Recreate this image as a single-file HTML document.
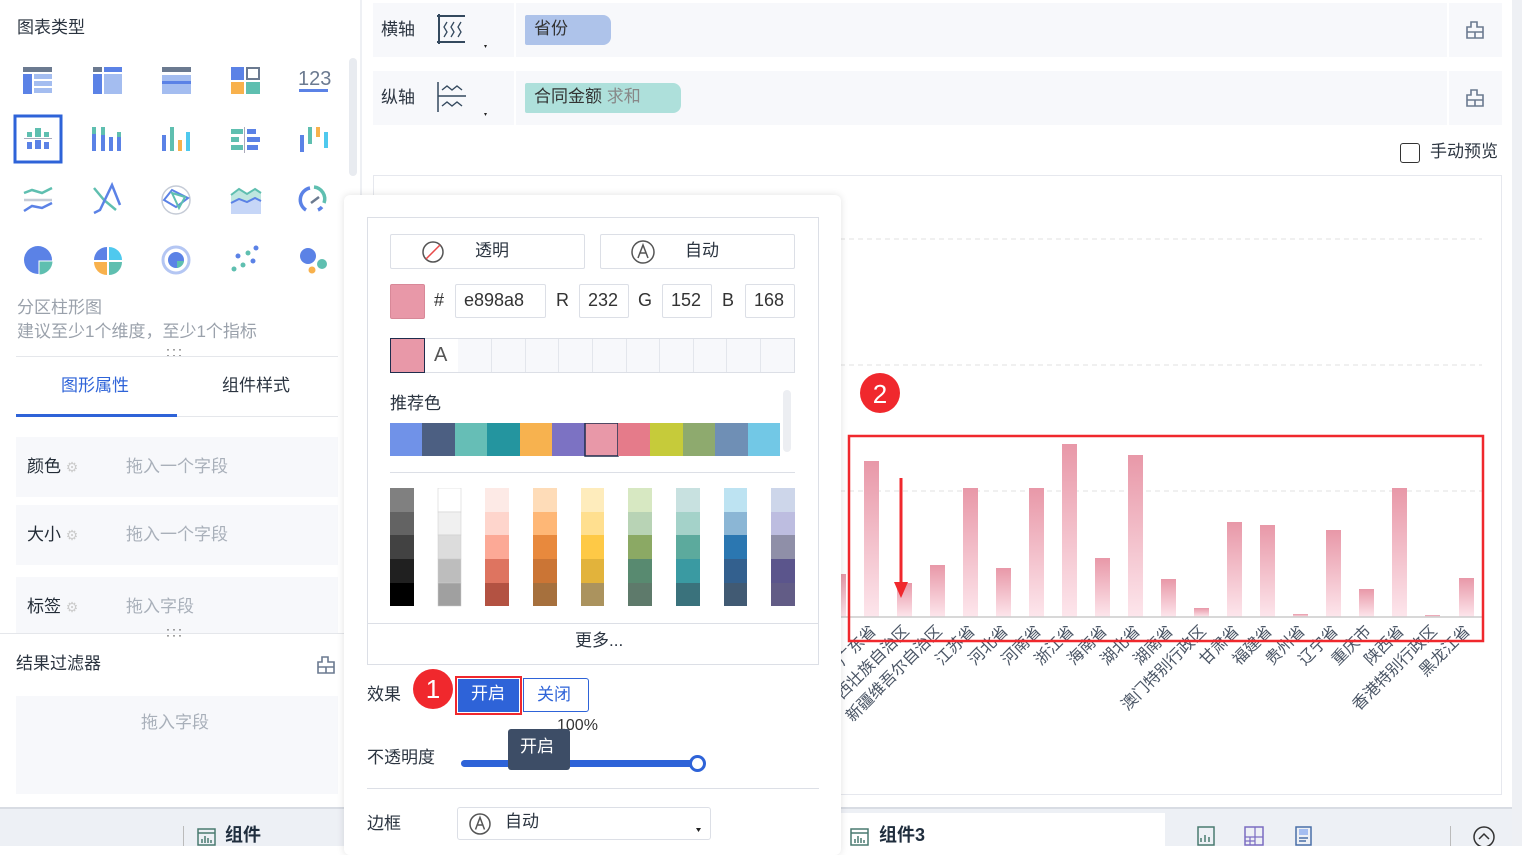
<!DOCTYPE html>
<html><head><meta charset="utf-8"><style>
*{box-sizing:border-box;margin:0;padding:0}
body{width:1522px;height:846px;overflow:hidden;background:#fff;font-family:"Liberation Sans","Noto Sans CJK SC",sans-serif;color:#1f2d3d;position:relative;font-size:16px;line-height:1.2}
.a{position:absolute}
.t{font-size:17px;color:#2b3440}
.g{color:#9aa1ab}
.field{position:absolute;left:16px;width:322px;height:60px;background:#f7f8fb}
.field .l{position:absolute;left:11px;top:20px;font-size:17px;color:#222b36}
.field .p{position:absolute;left:110px;top:20px;font-size:17px;color:#a9b0ba}
.inp{position:absolute;border:1px solid #dcdfe6;border-radius:2px;height:34px;top:284px;font-size:18px;color:#333;padding:5px 0 0 8px}
.cell{position:absolute;top:339px;height:33px;border-right:1px solid #e3e6ec;background:#f7f8fb}
</style></head><body>

<div class="a t" style="left:17px;top:18px">图表类型</div>
<svg class="a" style="left:0;top:55px" width="350" height="230">
 <g transform="translate(23,12)"><rect width="29" height="5" fill="#6b7a90"/><rect y="7" width="9" height="20" fill="#5b82e6"/><rect x="11" y="7" width="18" height="5" fill="#a4bdf0"/><rect x="11" y="14" width="18" height="5" fill="#a4bdf0"/><rect x="11" y="21" width="18" height="5" fill="#a4bdf0"/></g>
 <g transform="translate(93,12)"><rect width="9" height="5" fill="#6b7a90"/><rect x="11" width="18" height="5" fill="#5b82e6"/><rect y="7" width="9" height="20" fill="#5b82e6"/><rect x="11" y="7" width="18" height="20" fill="#a4bdf0"/></g>
 <g transform="translate(162,12)"><rect width="29" height="5" fill="#6b7a90"/><rect y="8" width="29" height="19" fill="#a4bdf0"/><rect y="14" width="29" height="3" fill="#5b82e6"/></g>
 <g transform="translate(231,12)"><rect width="13" height="13" fill="#5b82e6"/><rect x="16" y="1" width="12" height="11" fill="none" stroke="#6b7a90" stroke-width="2"/><rect y="15" width="13" height="12" fill="#f8b14c"/><rect x="15" y="15" width="14" height="12" fill="#5fbfb0"/></g>
 <text x="298" y="30" font-size="20" fill="#6b7a90" font-family="Liberation Sans">123</text><rect x="299" y="34" width="29" height="3" fill="#5b82e6"/>
 <rect x="15" y="61" width="46" height="46" fill="none" stroke="#2e63d8" stroke-width="3"/>
 <g fill="#5b82e6"><rect x="27" y="77" width="5" height="5" fill="#5fbfb0"/><rect x="35" y="73" width="6" height="9" fill="#5fbfb0"/><rect x="44" y="77" width="5" height="5" fill="#5fbfb0"/><rect x="24" y="83" width="28" height="1" fill="#aab"/><rect x="27" y="87" width="5" height="7"/><rect x="35" y="85" width="6" height="9"/><rect x="44" y="87" width="5" height="7"/></g>
 <g transform="translate(92,72)"><rect width="4" height="24" fill="#5b82e6"/><rect x="9" y="0" width="4" height="24" fill="#5b82e6"/><rect x="9" y="0" width="4" height="8" fill="#5fbfb0"/><rect x="17" y="10" width="4" height="14" fill="#5b82e6"/><rect x="25" y="5" width="4" height="19" fill="#5b82e6"/><rect x="25" y="5" width="4" height="5" fill="#5fbfb0"/><rect width="4" height="7" fill="#5fbfb0"/></g>
 <g transform="translate(162,72)"><rect y="8" width="4" height="16" fill="#5b82e6"/><rect x="8" width="4" height="24" fill="#5fbfb0"/><rect x="16" y="13" width="4" height="11" fill="#f8b14c"/><rect x="24" y="5" width="4" height="19" fill="#4fc9ee"/></g>
 <g transform="translate(231,74)"><rect width="12" height="5" fill="#5fbfb0"/><rect x="16" width="9" height="5" fill="#5b82e6"/><rect y="8" width="8" height="5" fill="#5fbfb0"/><rect x="16" y="8" width="13" height="5" fill="#5b82e6"/><rect y="16" width="12" height="5" fill="#5fbfb0"/><rect x="16" y="16" width="11" height="5" fill="#5b82e6"/><rect x="13" y="-2" width="1" height="26" fill="#aab"/></g>
 <g transform="translate(300,72)"><rect y="8" width="4" height="17" fill="#5b82e6"/><rect x="8" y="0" width="4" height="17" fill="#5fbfb0"/><rect x="16" y="0" width="4" height="10" fill="#f8b14c"/><rect x="24" y="5" width="4" height="16" fill="#4fc9ee"/></g>
 <g fill="none" stroke-width="2.5"><path d="M24 138 l8-3 10 3 10-5" stroke="#5fbfb0"/><path d="M24 145 h28" stroke="#c5cbd6"/><path d="M24 156 l8-5 10 2 10-5" stroke="#5b82e6"/></g>
 <g fill="none" stroke-width="2.5"><path d="M94 133 l10 12 l12 10" stroke="#5fbfb0"/><path d="M94 158 l6-3 l12-25 l8 20" stroke="#5b82e6"/></g>
 <g fill="none"><circle cx="176" cy="145" r="14" stroke="#c5cbd6" stroke-width="1.5"/><path d="M164 145 l8-10 16 8 -12 9z" stroke="#5b82e6" stroke-width="2"/><path d="M172 138 l13 4 -6 11z" stroke="#5fbfb0" stroke-width="2"/></g>
 <g><path d="M231 140 l8-6 8 5 8-5 6 4v16h-30z" fill="#bfe6df"/><path d="M231 148 l8-4 8 3 8-4 6 3v13h-30z" fill="#c6d6f7"/><path d="M231 140 l8-6 8 5 8-5 6 4" stroke="#5fbfb0" stroke-width="2" fill="none"/><path d="M231 148 l8-4 8 3 8-4 6 3" stroke="#5b82e6" stroke-width="2" fill="none"/></g>
 <g fill="none" stroke-width="3.5"><path d="M306 155 A12 12 0 0 1 310 133" stroke="#5b82e6"/><path d="M314 132 A12 12 0 0 1 324 148" stroke="#5fbfb0"/><path d="M322 152 A12 12 0 0 1 318 155" stroke="#5b82e6"/><path d="M311 148 l8-6" stroke="#6b7a90" stroke-width="2.5"/></g>
 <g><circle cx="38" cy="205" r="14" fill="#5b82e6"/><path d="M39 206 h14 a14 14 0 0 1 -14 14z" fill="#5fbfb0" stroke="#fff"/></g>
 <g><path d="M107 192 a13 13 0 0 0 -13 13 h13z" fill="#5b82e6"/><path d="M109 192 a13 13 0 0 1 13 13 h-13z" fill="#4fc9ee"/><path d="M94 207 a13 13 0 0 0 13 13 v-13z" fill="#f8b14c"/><path d="M109 207 h13 a13 13 0 0 1 -13 13z" fill="#5fbfb0"/></g>
 <g><circle cx="176" cy="205" r="13" fill="none" stroke="#b4c6f3" stroke-width="3"/><circle cx="176" cy="205" r="8" fill="#5b82e6"/><path d="M177 206 h7 a8 8 0 0 1 -7 7z" fill="#5fbfb0"/></g>
 <g fill="#5b82e6"><circle cx="256" cy="193" r="2.5"/><circle cx="238" cy="201" r="2.5"/><circle cx="253" cy="206" r="2.5"/><circle cx="248" cy="198" r="2.5" fill="#5fbfb0"/><circle cx="243" cy="210" r="2.5" fill="#5fbfb0"/><circle cx="234" cy="214" r="2.5" fill="#5fbfb0"/></g>
 <g><circle cx="308" cy="201" r="8" fill="#5b82e6"/><circle cx="322" cy="209" r="5" fill="#5fbfb0"/><circle cx="312" cy="215" r="3.5" fill="#f8b14c"/></g>
</svg>
<div class="a" style="left:349px;top:58px;width:8px;height:118px;background:#e8ebf0;border-radius:4px"></div>
<div class="a g" style="left:17px;top:298px;font-size:17px">分区柱形图</div>
<div class="a g" style="left:17px;top:322px;font-size:17px">建议至少1个维度，至少1个指标</div>
<div class="a" style="left:166px;top:346px;font-size:12px;letter-spacing:2px;color:#333;line-height:6px">···<br>···</div>
<div class="a" style="left:16px;top:356px;width:322px;height:1px;background:#e5e7eb"></div>
<div class="a" style="left:61px;top:376px;font-size:17px;color:#2e63d8">图形属性</div>
<div class="a t" style="left:222px;top:376px">组件样式</div>
<div class="a" style="left:16px;top:416px;width:322px;height:1px;background:#e5e7eb"></div>
<div class="a" style="left:16px;top:414px;width:161px;height:3px;background:#2e63d8"></div>
<div class="field" style="top:437px"><span class="l">颜色 <span style="color:#ccc;font-size:14px">⚙</span></span><span class="p">拖入一个字段</span></div>
<div class="field" style="top:505px"><span class="l">大小 <span style="color:#ccc;font-size:14px">⚙</span></span><span class="p">拖入一个字段</span></div>
<div class="field" style="top:577px;height:56px"><span class="l">标签 <span style="color:#ccc;font-size:14px">⚙</span></span><span class="p">拖入字段</span></div>
<div class="a" style="left:0;top:633px;width:344px;height:1px;background:#e5e7eb"></div>
<div class="a" style="left:166px;top:626px;font-size:12px;letter-spacing:2px;color:#333;line-height:6px">···<br>···</div>
<div class="a t" style="left:16px;top:654px">结果过滤器</div>
<svg class="a" style="left:316px;top:655px" width="20" height="20"><path d="M6 2h6v5h6v11H2V7h4z M2 12h16 M10 12v6" fill="none" stroke="#6b7a90" stroke-width="1.6"/></svg>
<div class="a" style="left:16px;top:696px;width:322px;height:98px;background:#f7f8fb"></div>
<div class="a" style="left:141px;top:713px;font-size:17px;color:#a9b0ba">拖入字段</div>
<div class="a" style="left:360px;top:0;width:2px;height:808px;background:#eef0f4"></div>

<div class="a" style="left:0;top:807px;width:1522px;height:39px;background:#edf0f5;border-top:2px solid #d8dce3"></div>
<div class="a" style="left:840px;top:813px;width:325px;height:33px;background:#fff"></div>
<div class="a" style="left:183px;top:826px;width:1px;height:20px;background:#bbb"></div>
<svg class="a" style="left:197px;top:828px" width="20" height="18"><rect x="1" y="1" width="17" height="16" fill="none" stroke="#4a7a70" stroke-width="1.5"/><path d="M1 5h17M5 15v-4M8 15v-7M11 15v-5M14 15v-3" stroke="#4a7a70" stroke-width="1.5"/></svg>
<div class="a" style="left:225px;top:825px;font-weight:bold;font-size:18px;color:#1f2d3d">组件</div>
<svg class="a" style="left:850px;top:828px" width="20" height="18"><rect x="1" y="1" width="17" height="16" fill="none" stroke="#4a7a70" stroke-width="1.5"/><path d="M1 5h17M5 15v-4M8 15v-7M11 15v-5M14 15v-3" stroke="#4a7a70" stroke-width="1.5"/></svg>
<div class="a" style="left:879px;top:825px;font-weight:bold;font-size:18px;color:#1f2d3d">组件3</div>
<svg class="a" style="left:1196px;top:826px" width="130" height="20"><rect x="2" y="1" width="16" height="18" fill="none" stroke="#4a7a70" stroke-width="1.5"/><path d="M5 16v-4M9 16v-7M13 16v-5" stroke="#4a7a70" stroke-width="1.5"/><rect x="49" y="1" width="18" height="18" fill="none" stroke="#7b6cc2" stroke-width="1.5"/><path d="M49 11h18M59 1v18M49 15h10M54 11v8" stroke="#7b6cc2" stroke-width="1.2"/><rect x="100" y="1" width="15" height="18" fill="none" stroke="#4a6fa8" stroke-width="1.5"/><rect x="103" y="3" width="9" height="6" fill="#a4bdf0"/><path d="M103 12h9M103 15h7" stroke="#4a6fa8" stroke-width="1.5"/></svg>
<div class="a" style="left:1450px;top:826px;width:1px;height:20px;background:#bbb"></div>
<svg class="a" style="left:1472px;top:825px" width="24" height="21"><circle cx="12" cy="12" r="10" fill="none" stroke="#333" stroke-width="1.5"/><path d="M7 14l5-5 5 5" fill="none" stroke="#333" stroke-width="1.5"/></svg>
<div class="a" style="left:1512px;top:0;width:10px;height:846px;background:#eef0f4"></div>

<div class="a" style="left:373px;top:3px;width:1129px;height:54px;background:#f7f8fb"></div>
<div class="a" style="left:373px;top:71px;width:1129px;height:54px;background:#f7f8fb"></div>
<div class="a" style="left:514px;top:3px;width:2px;height:54px;background:#fff"></div>
<div class="a" style="left:514px;top:71px;width:2px;height:54px;background:#fff"></div>
<div class="a" style="left:1447px;top:3px;width:2px;height:54px;background:#fff"></div>
<div class="a" style="left:1447px;top:71px;width:2px;height:54px;background:#fff"></div>
<div class="a t" style="left:381px;top:20px">横轴</div>
<div class="a t" style="left:381px;top:88px">纵轴</div>
<svg class="a" style="left:435px;top:14px" width="60" height="40"><path d="M4 0v30M2 2h28M2 28h28" stroke="#34495e" stroke-width="2" fill="none"/><path d="M12 8l-3 5 3 5-3 5M19 8l-3 5 3 5-3 5M26 8l-3 5 3 5-3 5" stroke="#34495e" stroke-width="1.3" fill="none"/><path d="M49 31l3 0-1.5 3z" fill="#222"/></svg>
<svg class="a" style="left:435px;top:82px" width="60" height="40"><path d="M3 0v30M3 14h28" stroke="#34495e" stroke-width="1.5" fill="none"/><path d="M7 8l5-4 5 4 5-4 5 4M7 24l5-4 5 4 5-4 5 4" stroke="#34495e" stroke-width="1.4" fill="none"/><path d="M49 31l3 0-1.5 3z" fill="#222"/></svg>
<div class="a" style="left:525px;top:15px;width:86px;height:30px;background:#aec3ea;border-radius:2px 8px 8px 2px;padding:4px 9px;font-size:17px;color:#333">省份</div>
<div class="a" style="left:525px;top:83px;width:156px;height:30px;background:#aee0db;border-radius:2px 8px 8px 2px;padding:4px 9px;font-size:17px;color:#333">合同金额 <span style="color:#888">求和</span></div>
<svg class="a" style="left:1465px;top:20px" width="20" height="20"><path d="M6 2h6v5h6v11H2V7h4z M2 12h16 M10 12v6" fill="none" stroke="#6b7a90" stroke-width="1.6"/></svg>
<svg class="a" style="left:1465px;top:88px" width="20" height="20"><path d="M6 2h6v5h6v11H2V7h4z M2 12h16 M10 12v6" fill="none" stroke="#6b7a90" stroke-width="1.6"/></svg>
<div class="a" style="left:1400px;top:143px;width:20px;height:20px;border:1.5px solid #333;border-radius:3px"></div>
<div class="a t" style="left:1430px;top:142px">手动预览</div>

<div class="a" style="left:373px;top:175px;width:1129px;height:620px;border:1px solid #e6e8ee"></div>
<svg class="a" style="left:0;top:0" width="1522" height="846">
 <defs><linearGradient id="bg" x1="0" y1="0" x2="0" y2="1"><stop offset="0" stop-color="#e898a8"/><stop offset="1" stop-color="#fde6ec"/></linearGradient></defs>
 <g stroke="#e0e0e0" stroke-dasharray="5 4"><path d="M840 239H1482M840 365H1482M840 491H1482"/></g>
 <g fill="url(#bg)">
  <rect x="838" y="574" width="8" height="43"/><rect x="864" y="461" width="15" height="156"/><rect x="897" y="583" width="15" height="34"/><rect x="930" y="565" width="15" height="52"/><rect x="963" y="488" width="15" height="129"/><rect x="996" y="568" width="15" height="49"/><rect x="1029" y="488" width="15" height="129"/><rect x="1062" y="444" width="15" height="173"/><rect x="1095" y="558" width="15" height="59"/><rect x="1128" y="455" width="15" height="162"/><rect x="1161" y="579" width="15" height="38"/><rect x="1194" y="608" width="15" height="9"/><rect x="1227" y="522" width="15" height="95"/><rect x="1260" y="525" width="15" height="92"/><rect x="1293" y="614" width="15" height="3"/><rect x="1326" y="530" width="15" height="87"/><rect x="1359" y="589" width="15" height="28"/><rect x="1392" y="488" width="15" height="129"/><rect x="1425" y="615" width="15" height="2"/><rect x="1459" y="578" width="15" height="39"/>
 </g>
 <path d="M838 617H1482" stroke="#ccc" stroke-width="1.5"/>
 <g font-size="16" fill="#4a5565" text-anchor="end" font-family="Liberation Sans,Noto Sans CJK SC,sans-serif">
  <text transform="translate(877,632) rotate(-45)">广东省</text><text transform="translate(910,632) rotate(-45)">广西壮族自治区</text><text transform="translate(943,632) rotate(-45)">新疆维吾尔自治区</text><text transform="translate(976,632) rotate(-45)">江苏省</text><text transform="translate(1009,632) rotate(-45)">河北省</text><text transform="translate(1042,632) rotate(-45)">河南省</text><text transform="translate(1075,632) rotate(-45)">浙江省</text><text transform="translate(1108,632) rotate(-45)">海南省</text><text transform="translate(1141,632) rotate(-45)">湖北省</text><text transform="translate(1174,632) rotate(-45)">湖南省</text><text transform="translate(1207,632) rotate(-45)">澳门特别行政区</text><text transform="translate(1240,632) rotate(-45)">甘肃省</text><text transform="translate(1273,632) rotate(-45)">福建省</text><text transform="translate(1306,632) rotate(-45)">贵州省</text><text transform="translate(1339,632) rotate(-45)">辽宁省</text><text transform="translate(1372,632) rotate(-45)">重庆市</text><text transform="translate(1405,632) rotate(-45)">陕西省</text><text transform="translate(1438,632) rotate(-45)">香港特别行政区</text><text transform="translate(1471,632) rotate(-45)">黑龙江省</text>
 </g>
 <rect x="849" y="436" width="634" height="205" fill="none" stroke="#f0282d" stroke-width="2.5"/>
 <path d="M901 478V585" stroke="#f0282d" stroke-width="3"/><path d="M894 582h14l-7 16z" fill="#f0282d"/>
 <circle cx="880" cy="393" r="20" fill="#f0282d"/><text x="880" y="403" font-size="26" fill="#fff" text-anchor="middle" font-family="Liberation Sans">2</text>
</svg>

<div class="a" style="left:344px;top:195px;width:497px;height:660px;background:#fff;border-radius:6px;box-shadow:0 0 8px rgba(0,0,0,0.12)"></div>
<div class="a" style="left:367px;top:217px;width:452px;height:448px;border:1px solid #dcdfe6"></div>
<div class="a" style="left:390px;top:234px;width:195px;height:35px;border:1px solid #dcdfe6;border-radius:2px"></div>
<div class="a" style="left:600px;top:234px;width:195px;height:35px;border:1px solid #dcdfe6;border-radius:2px"></div>
<svg class="a" style="left:421px;top:240px" width="24" height="24"><circle cx="12" cy="12" r="10" fill="none" stroke="#555" stroke-width="1.5"/><path d="M5 19L19 5" stroke="#e84a4a" stroke-width="1.5"/></svg>
<div class="a t" style="left:475px;top:241px">透明</div>
<svg class="a" style="left:631px;top:240px" width="24" height="24"><circle cx="12" cy="12" r="11" fill="none" stroke="#555" stroke-width="1.5"/><path d="M7 18l5-13 5 13M9 13h6" fill="none" stroke="#555" stroke-width="1.5"/></svg>
<div class="a t" style="left:685px;top:241px">自动</div>
<div class="a" style="left:390px;top:284px;width:35px;height:35px;background:#e898a8;border:1px solid #d88898;border-radius:2px"></div>
<div class="a" style="left:434px;top:290px;font-size:18px;color:#333">#</div>
<div class="inp" style="left:455px;width:91px">e898a8</div>
<div class="a" style="left:556px;top:290px;font-size:18px;color:#333">R</div>
<div class="inp" style="left:579px;width:50px">232</div>
<div class="a" style="left:638px;top:290px;font-size:18px;color:#333">G</div>
<div class="inp" style="left:662px;width:50px">152</div>
<div class="a" style="left:722px;top:290px;font-size:18px;color:#333">B</div>
<div class="inp" style="left:745px;width:50px">168</div>
<div class="a" style="left:390px;top:338px;width:405px;height:35px;border:1px solid #dcdfe6;background:#f7f8fb"></div>
<div class="cell" style="left:458px;width:34px"></div><div class="cell" style="left:492px;width:34px"></div><div class="cell" style="left:526px;width:33px"></div><div class="cell" style="left:559px;width:34px"></div><div class="cell" style="left:593px;width:34px"></div><div class="cell" style="left:627px;width:33px"></div><div class="cell" style="left:660px;width:34px"></div><div class="cell" style="left:694px;width:33px"></div><div class="cell" style="left:727px;width:34px"></div>
<div class="a" style="left:424px;top:339px;width:34px;height:33px;background:#fff"></div>
<div class="a" style="left:390px;top:338px;width:35px;height:35px;background:#e898a8;border:1.5px solid #1f2d4d"></div>
<div class="a" style="left:434px;top:343px;font-size:20px;color:#555">A</div>
<div class="a t" style="left:390px;top:394px">推荐色</div>
<div class="a" style="left:783px;top:390px;width:8px;height:62px;background:#eceef2;border-radius:4px"></div>
<svg class="a" style="left:390px;top:423px" width="390" height="35">
 <g><rect x="0" width="33" height="33" fill="#7092e8"/><rect x="32" width="33" height="33" fill="#4c5f82"/><rect x="65" width="33" height="33" fill="#66beb6"/><rect x="97" width="33" height="33" fill="#24959f"/><rect x="130" width="33" height="33" fill="#f7b24f"/><rect x="162" width="33" height="33" fill="#7c72c3"/><rect x="195" width="33" height="33" fill="#e898a8" stroke="#1f2d4d" stroke-width="1.5"/><rect x="228" width="33" height="33" fill="#e57b8a"/><rect x="260" width="33" height="33" fill="#c6cb3a"/><rect x="293" width="33" height="33" fill="#8eaa6e"/><rect x="325" width="33" height="33" fill="#6f8fb5"/><rect x="358" width="32" height="33" fill="#72c8e6"/></g>
</svg>
<div class="a" style="left:390px;top:472px;width:405px;height:1px;background:#dcdfe6"></div>
<svg class="a" style="left:390px;top:488px" width="406" height="120">
 <g><rect width="24" height="24" fill="#808080"/><rect y="24" width="24" height="23" fill="#636363"/><rect y="47" width="24" height="24" fill="#424242"/><rect y="71" width="24" height="24" fill="#202020"/><rect y="95" width="24" height="23" fill="#000"/></g>
 <g transform="translate(48,0)" stroke="#ccc" stroke-width=".5"><rect width="23" height="24" fill="#fff"/><rect y="24" width="23" height="23" fill="#f0f0f0"/><rect y="47" width="23" height="24" fill="#dcdcdc"/><rect y="71" width="23" height="24" fill="#bdbdbd"/><rect y="95" width="23" height="23" fill="#a0a0a0"/></g>
 <g transform="translate(95,0)"><rect width="24" height="24" fill="#fdeae6"/><rect y="24" width="24" height="23" fill="#fed5cc"/><rect y="47" width="24" height="24" fill="#fca996"/><rect y="71" width="24" height="24" fill="#de7460"/><rect y="95" width="24" height="23" fill="#b35242"/></g>
 <g transform="translate(143,0)"><rect width="24" height="24" fill="#fedcb8"/><rect y="24" width="24" height="23" fill="#feb776"/><rect y="47" width="24" height="24" fill="#e8893d"/><rect y="71" width="24" height="24" fill="#cb7535"/><rect y="95" width="24" height="23" fill="#a6703d"/></g>
 <g transform="translate(191,0)"><rect width="23" height="24" fill="#feecbc"/><rect y="24" width="23" height="23" fill="#ffdf8f"/><rect y="47" width="23" height="24" fill="#fec946"/><rect y="71" width="23" height="24" fill="#e2b33b"/><rect y="95" width="23" height="23" fill="#ab935e"/></g>
 <g transform="translate(238,0)"><rect width="24" height="24" fill="#d7e8c2"/><rect y="24" width="24" height="23" fill="#b8d3b5"/><rect y="47" width="24" height="24" fill="#8ba964"/><rect y="71" width="24" height="24" fill="#588a70"/><rect y="95" width="24" height="23" fill="#5e7a6b"/></g>
 <g transform="translate(286,0)"><rect width="24" height="24" fill="#c8e1e0"/><rect y="24" width="24" height="23" fill="#a4d2c9"/><rect y="47" width="24" height="24" fill="#5caa9d"/><rect y="71" width="24" height="24" fill="#3a9aa2"/><rect y="95" width="24" height="23" fill="#3a727c"/></g>
 <g transform="translate(334,0)"><rect width="23" height="24" fill="#bde3f2"/><rect y="24" width="23" height="23" fill="#8bb6d5"/><rect y="47" width="23" height="24" fill="#2b77b1"/><rect y="71" width="23" height="24" fill="#33608e"/><rect y="95" width="23" height="23" fill="#415a73"/></g>
 <g transform="translate(381,0)"><rect width="24" height="24" fill="#cdd6ea"/><rect y="24" width="24" height="23" fill="#bdbde0"/><rect y="47" width="24" height="24" fill="#8f8fa8"/><rect y="71" width="24" height="24" fill="#5b558c"/><rect y="95" width="24" height="23" fill="#625c86"/></g>
</svg>
<div class="a" style="left:367px;top:623px;width:452px;height:1px;background:#dcdfe6"></div>
<div class="a t" style="left:575px;top:631px">更多...</div>
<div class="a t" style="left:367px;top:685px">效果</div>
<div class="a" style="left:523px;top:678px;width:66px;height:34px;border:1px solid #2e63d8;border-radius:0 3px 3px 0;color:#2e63d8;font-size:17px;padding:6px 0 0 13px">关闭</div>
<div class="a" style="left:455px;top:676px;width:67px;height:39px;border:2.5px solid #f0282d"></div>
<div class="a" style="left:458px;top:679px;width:61px;height:33px;background:#2e63d8;color:#fff;font-size:17px;padding:5px 0 0 13px">开启</div>
<div class="a" style="left:413px;top:669px;width:40px;height:40px;border-radius:50%;background:#f0282d;color:#fff;font-size:26px;text-align:center;line-height:40px">1</div>
<div class="a" style="left:557px;top:716px;font-size:16px;color:#333">100%</div>
<div class="a t" style="left:367px;top:748px">不透明度</div>
<div class="a" style="left:461px;top:760px;width:236px;height:7px;background:#2e63d8;border-radius:4px"></div>
<div class="a" style="left:689px;top:755px;width:17px;height:17px;border-radius:50%;background:#fff;border:3px solid #2e63d8"></div>
<div class="a" style="left:508px;top:729px;width:62px;height:41px;background:#3d4d66;border-radius:3px;color:#fff;font-size:17px;padding:8px 0 0 12px">开启</div>
<div class="a" style="left:367px;top:788px;width:452px;height:1px;background:#dcdfe6"></div>
<div class="a t" style="left:367px;top:814px">边框</div>
<div class="a" style="left:457px;top:807px;width:254px;height:33px;border:1px solid #dcdfe6;border-radius:3px"></div>
<svg class="a" style="left:468px;top:812px" width="24" height="24"><circle cx="12" cy="12" r="10" fill="none" stroke="#555" stroke-width="1.5"/><path d="M7.5 17.5l4.5-12 4.5 12M9 13h6" fill="none" stroke="#555" stroke-width="1.5"/></svg>
<div class="a t" style="left:505px;top:812px">自动</div>
<svg class="a" style="left:696px;top:828px" width="6" height="5"><path d="M0 0h5l-2.5 4z" fill="#222"/></svg>
</body></html>
